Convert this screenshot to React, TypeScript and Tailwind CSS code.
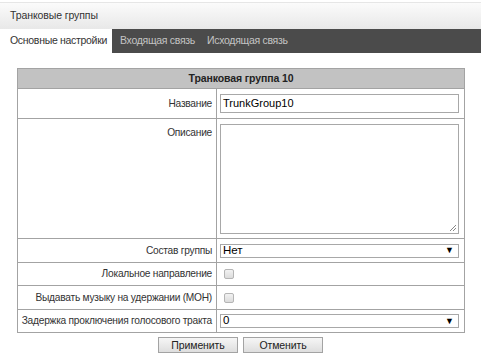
import React from "react";

function Row({ label, children, top = false, h }: { label: string; children: React.ReactNode; top?: boolean; h: string }) {
  return (
    <tr className={h}>
      <td className={`border border-[#a3a3a3] text-right pr-[4px] whitespace-nowrap overflow-hidden ${top ? "align-top pt-[6px]" : "align-middle"}`}>{label}</td>
      <td className="border border-[#a3a3a3] pl-[3px] pr-[5px] align-middle">{children}</td>
    </tr>
  );
}

function Select({ value }: { value: string }) {
  return (
    <div className="h-[14px] border border-[#a8a8a8] flex items-center justify-between pl-[2px] pr-[4px] text-[11.5px] leading-none text-black tracking-normal">
      <span>{value}</span>
      <span className="text-[9px]">▼</span>
    </div>
  );
}

function Checkbox() {
  return <div className="w-[10px] h-[10px] ml-[4px] border border-[#b5b5b5] rounded-[2px] bg-gradient-to-b from-[#f2f2f2] to-[#dcdcdc]" />;
}

export default function App() {
  return (
    <div className="w-[481px] h-[363px] bg-white text-[10.2px] tracking-[-0.25px] text-[#333] overflow-hidden" style={{ fontFamily: '"Liberation Sans", Arial, sans-serif' }}>
      <div className="h-[2px]" />
      <div className="h-[27px] border-t border-[#e6e6e6] bg-gradient-to-b from-[#fbfbfb] to-[#e8e8e8] flex items-center pl-[10px] text-[10.5px] tracking-[-0.1px] text-[#333] whitespace-nowrap">
        Транковые группы
      </div>
      <div className="h-[24px] bg-[#4b4b4b] flex items-stretch whitespace-nowrap text-[10.5px] tracking-[-0.3px]">
        <div className="bg-white text-[#333] w-[112px] shrink-0 flex items-center pl-[10px]">Основные настройки</div>
        <div className="text-[#c4c4c4] flex items-center pl-[8px]">Входящая связь</div>
        <div className="text-[#c4c4c4] flex items-center pl-[12px]">Исходящая связь</div>
      </div>
      <div className="pt-[15px] pl-[17px]">
        <table className="w-[448px] table-fixed border-collapse border border-[#a3a3a3]">
          <colgroup>
            <col className="w-[199px]" />
            <col />
          </colgroup>
          <tbody>
            <tr className="h-[20px]">
              <td colSpan={2} className="bg-[#c2c2c2] border border-[#a3a3a3] text-center font-bold text-[#222] text-[10.5px] tracking-[-0.1px]">Транковая группа 10</td>
            </tr>
            <Row label="Название" h="h-[30px]">
              <div className="h-[19px] border border-[#a8a8a8] flex items-center pl-[2px] text-[11px] text-black tracking-normal">TrunkGroup10</div>
            </Row>
            <Row label="Описание" top h="h-[120px]">
              <div className="h-[110px] border border-[#a8a8a8] relative">
                <svg className="absolute right-[1px] bottom-[1px]" width="8" height="8" viewBox="0 0 8 8">
                  <line x1="1" y1="7" x2="7" y2="1" stroke="#888" strokeWidth="1" />
                  <line x1="4" y1="7" x2="7" y2="4" stroke="#888" strokeWidth="1" />
                </svg>
              </div>
            </Row>
            <Row label="Состав группы" h="h-[24px]">
              <Select value="Нет" />
            </Row>
            <Row label="Локальное направление" h="h-[23px]">
              <Checkbox />
            </Row>
            <Row label="Выдавать музыку на удержании (MOH)" h="h-[24px]">
              <Checkbox />
            </Row>
            <Row label="Задержка проключения голосового тракта" h="h-[23px]">
              <Select value="0" />
            </Row>
          </tbody>
        </table>
      </div>
      <div className="flex gap-[5px] pl-[158px] pt-[4px]">
        <button className="w-[80px] h-[16px] border border-[#a3a3a3] bg-gradient-to-b from-[#f6f6f6] to-[#dedede] text-[#222] leading-none text-[10.5px] tracking-[-0.1px]">Применить</button>
        <button className="w-[80px] h-[16px] border border-[#a3a3a3] bg-gradient-to-b from-[#f6f6f6] to-[#dedede] text-[#222] leading-none text-[10.5px] tracking-[-0.1px]">Отменить</button>
      </div>
    </div>
  );
}
